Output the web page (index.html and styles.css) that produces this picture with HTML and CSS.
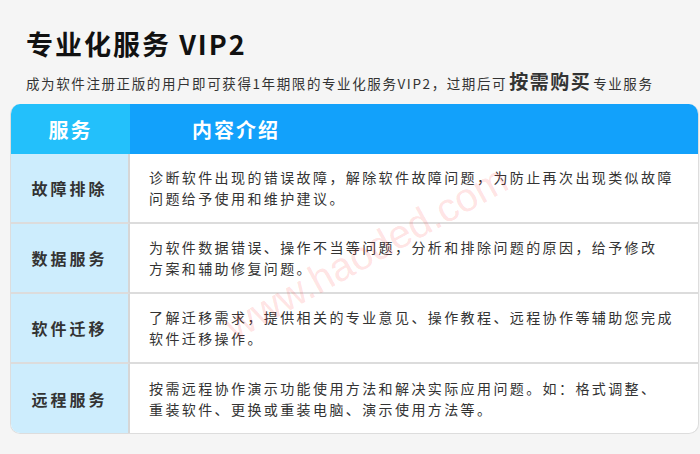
FILE: index.html
```html
<!DOCTYPE html>
<html lang="zh-CN">
<head>
    <meta charset="UTF-8">
    <meta name="viewport" content="width=device-width, initial-scale=1.0">
    <title>专业化服务 VIP2</title>
    <link rel="stylesheet" href="styles.css">
</head>
<body>

    <h1 class="title">专业化服务 VIP2</h1>
    <p class="intro">成为软件注册正版的用户即可获得1年期限的专业化服务VIP2，过期后可<strong>按需购买</strong>专业服务</p>

    <div class="service-table">
        <!-- 表头 -->
        <div class="head head-name">服务</div>
        <div class="head head-desc">内容介绍</div>

        <!-- 服务列表 -->
        <div class="name">故障排除</div>
        <div class="desc">诊断软件出现的错误故障，解除软件故障问题，为防止再次出现类似故障<br>问题给予使用和维护建议。</div>

        <div class="name">数据服务</div>
        <div class="desc">为软件数据错误、操作不当等问题，分析和排除问题的原因，给予修改<br>方案和辅助修复问题。</div>

        <div class="name">软件迁移</div>
        <div class="desc">了解迁移需求，提供相关的专业意见、操作教程、远程协作等辅助您完成<br>软件迁移操作。</div>

        <div class="name">远程服务</div>
        <div class="desc">按需远程协作演示功能使用方法和解决实际应用问题。如：格式调整、<br>重装软件、更换或重装电脑、演示使用方法等。</div>

        <!-- 水印 -->
        <div class="watermark">www.haoded.com</div>
    </div>

</body>
</html>
```

FILE: styles.css
```css
body {
    margin: 0;
    padding: 0 0 0 10px;
    background: #f5f5f5;
    font-family: "Noto Sans CJK SC", "Noto Sans", sans-serif;
    color: #333;
}

.title {
    margin: 0;
    padding: 27px 0 0 16px;
    font-size: 27px;
    line-height: 34px;
    font-weight: bold;
    letter-spacing: 2px;
    color: #111;
}

.intro {
    margin: 0;
    padding: 7px 0 0 16px;
    height: 36px;
    font-size: 13.5px;
    line-height: 26px;
    letter-spacing: 1.6px;
    color: #333;
}

.intro strong {
    font-size: 19px;
    letter-spacing: 1.5px;
    margin: 0 2px;
}

.service-table {
    position: relative;
    display: grid;
    grid-template-columns: 119px 1fr;
    grid-template-rows: 50px repeat(4, 70px);
    width: 689px;
    height: 330px;
    box-sizing: border-box;
    border: 1px solid #ddd;
    border-top: none;
    border-radius: 10px;
    overflow: hidden;
    background: #fff;
}

.head {
    display: flex;
    align-items: center;
    font-size: 20px;
    font-weight: bold;
    letter-spacing: 2px;
    color: #fff;
}

.head-name {
    justify-content: center;
    background: #23c0fb;
}

.head-desc {
    padding-left: 62px;
    background: #12a1fb;
}

.name {
    display: flex;
    align-items: center;
    justify-content: center;
    background: #cdedfd;
    border-right: 2px solid #d6d6d6;
    border-bottom: 2px solid #dcdcdc;
    font-size: 16px;
    font-weight: bold;
    letter-spacing: 3px;
    color: #333;
}

.desc {
    display: flex;
    align-items: center;
    padding: 0 10px 0 19px;
    border-bottom: 2px solid #dcdcdc;
    font-size: 14px;
    line-height: 21px;
    letter-spacing: 2.4px;
    color: #333;
    white-space: nowrap;
}

.name:nth-last-child(3),
.desc:nth-last-child(2) {
    border-bottom: none;
}

.watermark {
    position: absolute;
    left: 228px;
    top: 200px;
    transform: rotate(-29deg);
    transform-origin: left bottom;
    font-family: "Liberation Sans", sans-serif;
    font-size: 40px;
    color: rgba(255, 50, 50, 0.15);
    pointer-events: none;
    white-space: nowrap;
}
```
